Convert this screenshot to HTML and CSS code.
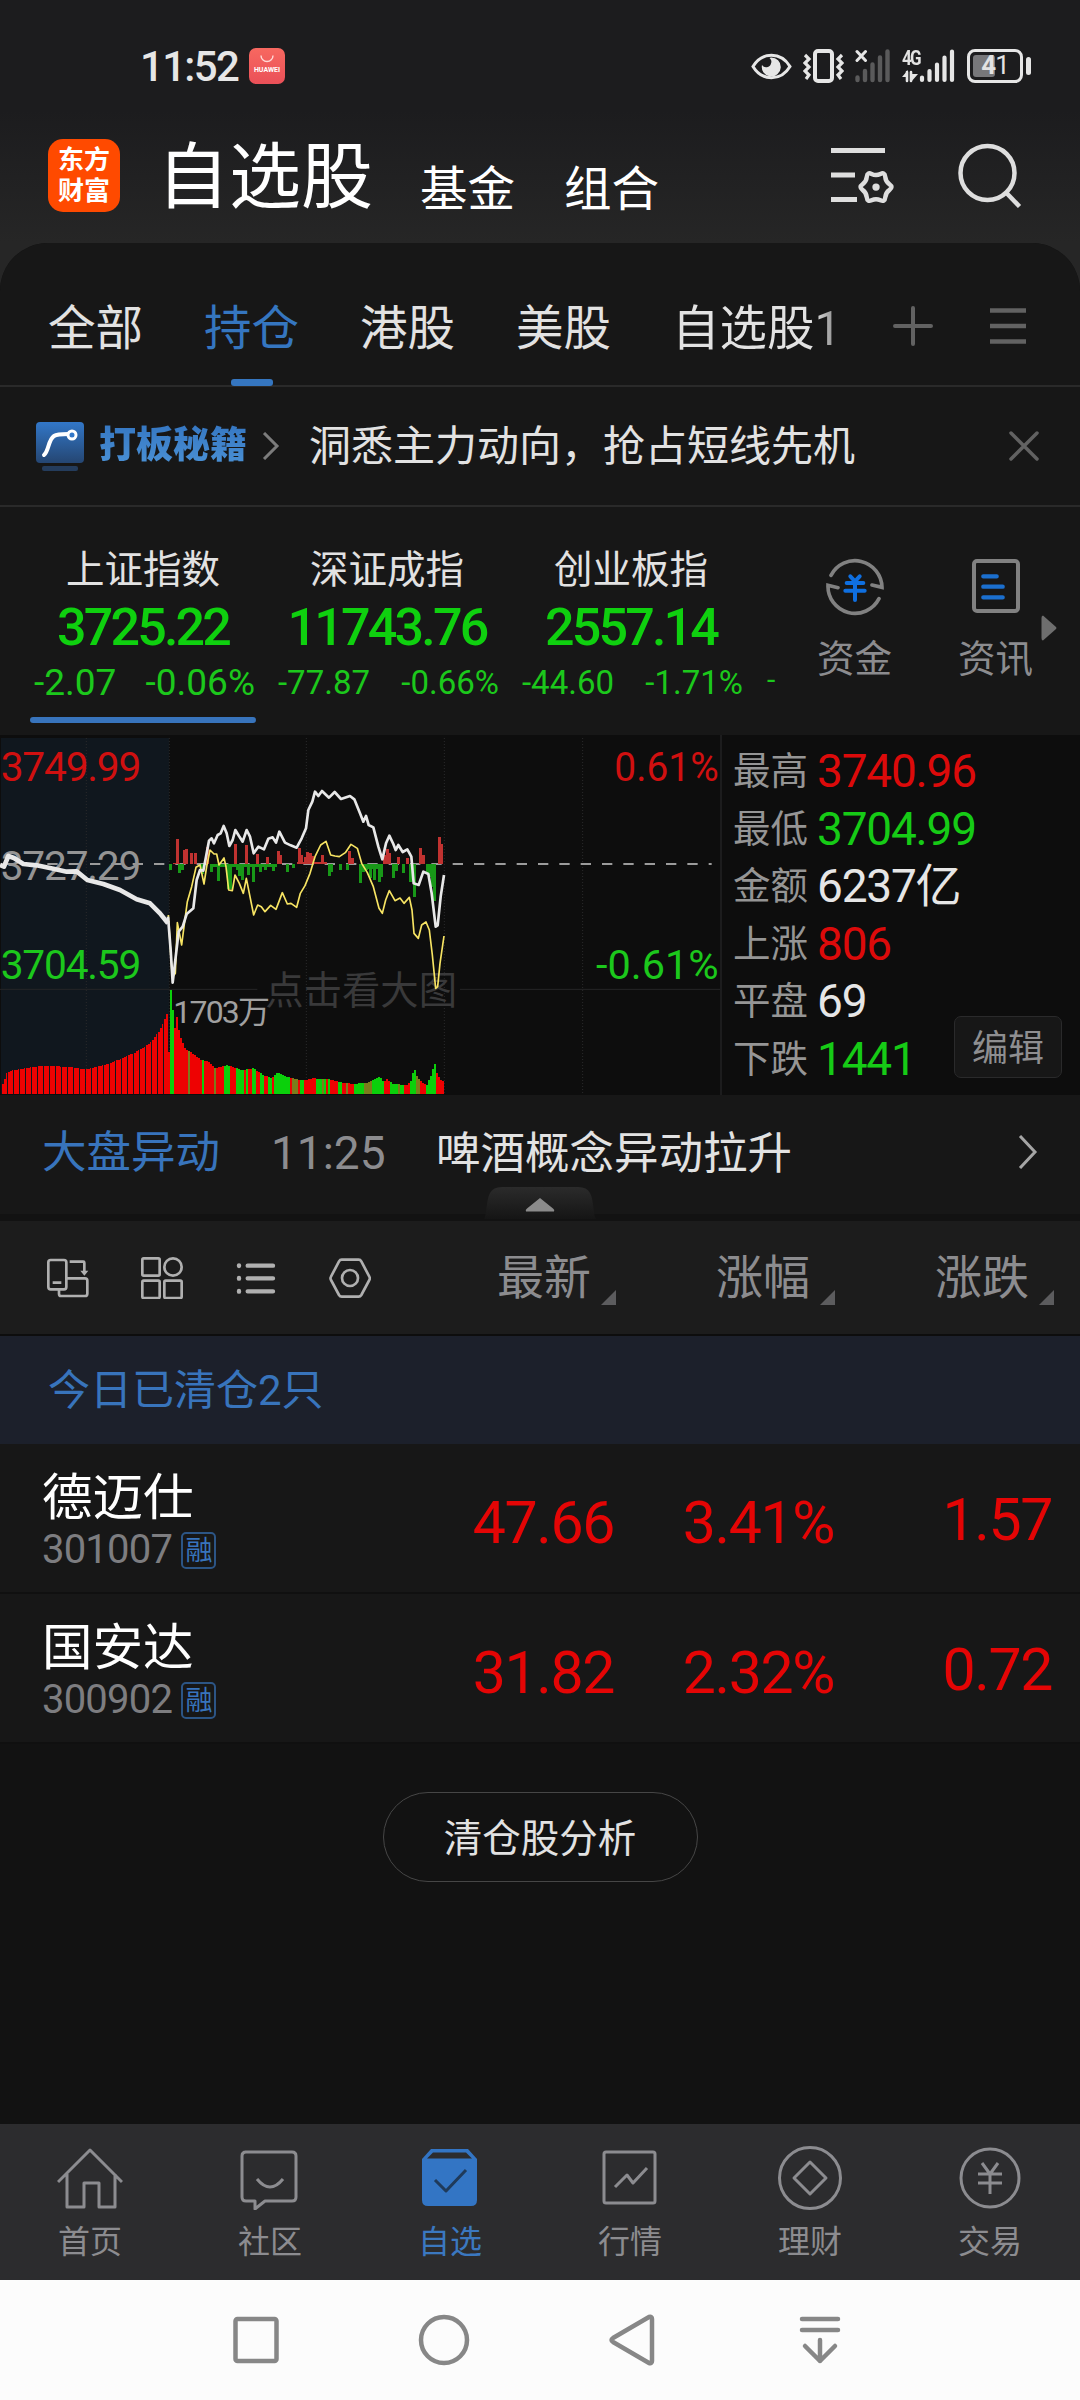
FILE: index.html
```html
<!DOCTYPE html>
<html lang="zh-CN">
<head>
  <meta charset="UTF-8">
  <meta name="viewport" content="width=device-width, initial-scale=1.0">
  <title>自选股</title>
  <link rel="stylesheet" href="styles.css">
</head>
<body>
  <header class="header">
    <div class="status">
      <span class="clock">11:52</span>
      <div class="huawei">
        <svg width="14" height="8" viewBox="0 0 14 8" fill="none" stroke="#ffd9d6" stroke-width="1.4"><path d="M1 0.5a6 6 0 0 0 12 0"/></svg>
        <span>HUAWEI</span>
      </div>
      <div class="status-icons">
        <svg width="41" height="34" viewBox="0 0 41 34">
          <path d="M2 17.500C11 2.500 30 2.500 39 17.500C30 32.500 11 32.500 2 17.500Z" fill="none" stroke="#e6e6e6" stroke-width="3"/>
          <path d="M20 8.500a9.500 9.500 0 1 1-9 7.500a5 5 0 0 0 9-1.500c1-2.500 0-4-1.500-5.500z" fill="#e6e6e6"/>
        </svg>
        <svg class="vibrate" width="41" height="34" viewBox="0 0 41 34" fill="none" stroke="#e6e6e6">
          <rect x="12" y="2" width="17" height="30" rx="3" stroke-width="4"/>
          <path d="M2 6l4 4-4 4 4 4-4 4 4 4-3 4M39 6l-4 4 4 4-4 4 4 4-4 4 3 4" stroke-width="3.200"/>
        </svg>
        <svg class="signal" width="36" height="34" viewBox="0 0 36 34" stroke-linecap="round">
          <path d="M2.500 28.500v2.500M10 22v9M17.500 15.500v15.500M25 8.500v22.500M32.500 2.500v28.500" stroke="#5a5a5b" stroke-width="4.400"/>
          <path d="M2 2.500l8.500 9M10.500 2.500l-8.500 9" stroke="#e6e6e6" stroke-width="3"/>
        </svg>
        <div class="mobile">
          <span>4G</span>
          <svg width="53" height="34" viewBox="0 0 53 34" stroke="#e6e6e6" stroke-linecap="round">
            <path d="M20 28.500v2.500M27.500 22v9M35 15.500v15.500M42.500 8.500v22.500M50 2.500v28.500" stroke-width="4.200"/>
            <path d="M5 23v9M9 23v9" stroke-width="2.600"/>
            <path d="M0 28l6-7v7zM9 33l7-8h-7z" fill="#e6e6e6" stroke="none"/>
          </svg>
        </div>
        <div class="battery"><i></i><span><b>4</b>1</span></div>
      </div>
    </div>
    <div class="topbar">
      <div class="logo">东方<br>财富</div>
      <h1>自选股</h1>
      <a class="top-link">基金</a>
      <a class="top-link">组合</a>
      <svg class="manage" width="64" height="60" viewBox="0 0 64 60" fill="none" stroke="#dedede">
        <path d="M1 5.500h54M1 30h24M1 54.500h26" stroke-width="5"/>
        <g transform="translate(3.700 3.900) scale(0.92)">
          <path d="M60.700 44.500Q56.400 47.500 56 52.800Q55.500 58 50.800 55.800Q46 53.500 41.200 55.800Q36.500 58 36 52.800Q35.600 47.500 31.300 44.500Q27 41.500 31.300 38.500Q35.600 35.500 36 30.200Q36.500 25 41.200 27.200Q46 29.500 50.800 27.200Q55.500 25 56 30.200Q56.400 35.500 60.700 38.500Q65 41.500 60.700 44.500Z" stroke-width="4.800"/>
          <circle cx="46" cy="41.500" r="4" fill="#dedede" stroke="none"/>
        </g>
      </svg>
      <svg class="search" width="64" height="66" viewBox="0 0 64 66" fill="none" stroke="#dedede" stroke-width="4.500">
        <circle cx="29.500" cy="31" r="27"/><path d="M48.500 51l13 13.500"/>
      </svg>
    </div>
  </header>

  <main class="sheet">
    <nav class="tabs">
      <a>全部</a>
      <a class="active">持仓</a>
      <a>港股</a>
      <a>美股</a>
      <a class="fade">自选股1</a>
      <svg class="plus" width="40" height="40" viewBox="0 0 40 40" stroke="#626262" stroke-width="4" stroke-linecap="round"><path d="M2 20h36M20 2v36"/></svg>
      <svg class="menu" width="38" height="38" viewBox="0 0 38 38" stroke="#626262" stroke-width="4.500"><path d="M1 3.500h36M1 19h36M1 34.500h36"/></svg>
    </nav>

    <div class="banner">
      <svg width="50" height="50" viewBox="0 0 50 50">
        <defs><linearGradient id="tile" x1="0" y1="0" x2="0" y2="1"><stop offset="0" stop-color="#3277c8"/><stop offset="1" stop-color="#254672"/></linearGradient></defs>
        <rect x="1" y="1" width="48" height="41" rx="4" fill="url(#tile)"/>
        <rect x="7" y="45" width="36" height="5" rx="2" fill="#243c5c"/>
        <path d="M9 34c5-4 4-15 10-19c3-2 8-2 14-2" fill="none" stroke="#fff" stroke-width="4" stroke-linecap="round"/>
        <circle cx="37" cy="14" r="4" fill="#3277c8" stroke="#fff" stroke-width="3"/>
      </svg>
      <b>打板秘籍</b>
      <svg class="next" width="18" height="28" viewBox="0 0 18 28" fill="none" stroke="#7c7c7c" stroke-width="3"><path d="M2 1l13 13-13 13"/></svg>
      <p>洞悉主力动向，抢占短线先机</p>
      <svg class="close" width="30" height="30" viewBox="0 0 30 30" stroke="#626262" stroke-width="3.500" stroke-linecap="round"><path d="M2 2l26 26M28 2l-26 26"/></svg>
    </div>

    <section class="indexes">
      <div class="index active">
        <h2>上证指数</h2>
        <strong>3725.22</strong>
        <div class="change"><span>-2.07</span><span>-0.06%</span></div>
      </div>
      <div class="index">
        <h2>深证成指</h2>
        <strong>11743.76</strong>
        <div class="change"><span>-77.87</span><span>-0.66%</span></div>
      </div>
      <div class="index">
        <h2>创业板指</h2>
        <strong>2557.14</strong>
        <div class="change"><span>-44.60</span><span>-1.71%</span></div>
      </div>
      <span class="peek">-</span>
      <div class="shortcut">
        <svg width="60" height="60" viewBox="0 0 180 180" fill="none" stroke-linecap="round">
          <path d="M18 58A81 81 0 0 1 171 94L141 87M162 128A81 81 0 0 1 9 88L39 95" stroke="#818181" stroke-width="11"/>
          <path d="M76 61l14 15 14-15M90 76v56M65 81h50M61 104h58" stroke="#0f6fe0" stroke-width="12"/>
        </svg>
        资金
      </div>
      <div class="shortcut">
        <svg width="48" height="60" viewBox="0 0 144 180" fill="none" stroke-linecap="round">
          <rect x="6" y="15" width="132" height="150" rx="9" stroke="#818181" stroke-width="12"/>
          <path d="M34 61h40M34 92h58M34 124h58" stroke="#1b6fce" stroke-width="13"/>
        </svg>
        资讯
      </div>
      <svg class="more" width="16" height="26" viewBox="0 0 16 26"><path d="M2 0.500L15 12Q16 13 15 14L2 25.500Q0.500 25.500 0.500 23V3Q0.500 0.500 2 0.500Z" fill="#6e6e6e"/></svg>
    </section>

    <section class="market">
      <svg class="chart" width="720" height="360" viewBox="0 45 2160 1080">
        <rect x="3" y="54" width="505" height="1068" fill="#10171e"/>
        <path d="M259 54V1122M508 54V1122M919 54V1122M1333 54V1122M1748 54V1122" stroke="#2a2a2b" stroke-width="3" stroke-dasharray="3 6"/>
        <path d="M0 808H772M1380 808H2160" stroke="#262627" stroke-width="3"/>
        <path d="M14 432H2135" stroke="#9b9b9b" stroke-width="6" stroke-dasharray="31 33"/>
        <g id="bars"></g>
        <text class="up" x="2" y="182" textLength="422">3749.99</text>
        <text class="mid" x="2" y="479" textLength="422">3727.29</text>
        <text class="down" x="2" y="778" textLength="422">3704.59</text>
        <text class="up" x="1843" y="182" textLength="313" lengthAdjust="spacingAndGlyphs">0.61%</text>
        <text class="down" x="1788" y="778" textLength="368" lengthAdjust="spacingAndGlyphs">-0.61%</text>
        <text class="hint" x="796" y="852">点击看大图</text>
        <text class="volume" x="520" y="908" textLength="290">1703万</text>
        <path d="M505 585L512 700 517 770 526 760 532 608 545 675 552 620 562 545 575 500 588 442 600 435 612 492 620 440 630 390 642 402 650 402 657 435 672 414 678 440 686 510 697 512 705 465 718 490 730 520 739 475 748 520 761 585 773 555 784 560 795 575 812 556 828 568 847 518 862 552 873 550 890 562 901 520 915 497 930 460 945 410 962 375 978 364 992 405 1005 408 1018 410 1036 398 1053 373 1072 385 1085 430 1102 458 1120 500 1137 565 1147 580 1157 540 1168 512 1185 542 1200 534 1212 550 1228 532 1236 570 1242 640 1255 655 1265 615 1278 606 1288 630 1297 705 1307 805 1313 800 1320 730 1332 648" class="line avg"/>
        <path d="M0 435L12 440 25 408 42 414 70 432 110 436 160 446 200 455 230 454 262 480 310 492 360 510 410 538 450 550 480 580 504 610" class="line pre"/>
        <path d="M504 590L512 690 518 788 526 720 536 635 548 620 560 582 580 565 590 480 600 450 610 452 618 410 627 362 635 355 642 370 653 345 662 340 671 318 680 340 688 378 698 360 706 330 717 348 728 365 740 330 750 350 761 400 775 380 792 388 805 356 818 352 828 368 838 335 855 368 872 376 890 383 905 355 918 325 925 270 937 245 945 215 955 228 966 213 987 233 1004 216 1023 237 1050 228 1063 238 1080 280 1090 305 1098 288 1106 315 1120 322 1135 380 1147 418 1158 370 1168 347 1180 372 1187 390 1195 375 1208 396 1222 388 1234 410 1241 490 1256 495 1270 455 1285 462 1295 520 1307 620 1313 616 1322 530 1332 465" class="line price"/>
      </svg>
      <div class="stats">
        <p>最高<b class="up">3740.96</b></p>
        <p>最低<b class="down">3704.99</b></p>
        <p>金额<b>6237亿</b></p>
        <p>上涨<b class="up">806</b></p>
        <p>平盘<b>69</b></p>
        <p>下跌<b class="down">1441</b></p>
        <a class="edit">编辑</a>
      </div>
    </section>

    <div class="news">
      <span class="news-tag">大盘异动</span>
      <time>11:25</time>
      <p>啤酒概念异动拉升</p>
      <svg width="20" height="34" viewBox="0 0 20 34" fill="none" stroke="#a5a5a5" stroke-width="3"><path d="M2 1l15 16-15 16"/></svg>
    </div>
    <div class="divider">
      <svg class="handle" width="112" height="32" viewBox="0 0 112 32">
        <defs><linearGradient id="grip" x1="0" y1="0" x2="0" y2="1"><stop offset="0" stop-color="#2b2b2b"/><stop offset="1" stop-color="#151515"/></linearGradient></defs>
        <path d="M0 32C3 28 2 13 6 6Q9 0 18 0H94Q103 0 106 6C110 13 109 28 112 32Z" fill="url(#grip)"/>
        <path d="M42 24.500Q41 23 43 21.500L56 11 69 21.500Q71 23 70 24.500Z" fill="#8b8b8b"/>
      </svg>
    </div>

    <div class="toolbar">
      <svg width="42" height="42" viewBox="0 0 126 126" fill="none" stroke="#b0b0b0" stroke-width="8">
        <rect x="4" y="9" width="54" height="88" rx="7"/><path d="M17 77h26M68 14h41q3 0 3 3v28M58 64h56q7 0 7 7v39q0 7-7 7H42q-6 0-6-7V97"/>
        <path d="M100 41h24l-12 15z" fill="#b0b0b0" stroke="none"/>
      </svg>
      <svg width="42" height="42" viewBox="0 0 126 126" fill="none" stroke="#b0b0b0" stroke-width="8">
        <rect x="4" y="4" width="52" height="52" rx="4"/><circle cx="96" cy="30" r="26"/><rect x="4" y="71" width="52" height="52" rx="4"/><rect x="70" y="71" width="52" height="52" rx="4"/>
      </svg>
      <svg width="42" height="42" viewBox="0 0 126 126" fill="none" stroke="#b0b0b0" stroke-width="13" stroke-linecap="round">
        <path d="M12 25v2M12 63v2M12 102v2M38 26h76M38 64h76M38 103h76"/>
      </svg>
      <svg width="42" height="42" viewBox="0 0 126 126" fill="none" stroke="#b0b0b0" stroke-width="8">
        <path d="M38 8h51q5 0 8 5l24 46q3 5 0 10l-24 45q-3 5-8 5H38q-5 0-8-5L6 69q-3-5 0-10L30 13q3-5 8-5z"/><circle cx="63" cy="63" r="24"/>
      </svg>
      <span class="sort">最新</span>
      <span class="sort">涨幅</span>
      <span class="sort">涨跌</span>
    </div>

    <div class="notice">今日已清仓2只</div>

    <section class="stocks">
      <div class="stock">
        <div class="name"><h3>德迈仕</h3><p>301007<i>融</i></p></div>
        <span class="latest">47.66</span>
        <span class="percent">3.41%</span>
        <span class="amount">1.57</span>
      </div>
      <div class="stock">
        <div class="name"><h3>国安达</h3><p>300902<i>融</i></p></div>
        <span class="latest">31.82</span>
        <span class="percent">2.32%</span>
        <span class="amount">0.72</span>
      </div>
    </section>

    <a class="analysis">清仓股分析</a>
  </main>

  <nav class="tabbar">
    <a>
      <svg width="66" height="66" viewBox="0 0 66 66"><path d="M1 38L33 6l32 32M10 30v33h17V39h15v24h16V30"/></svg>
      首页
    </a>
    <a>
      <svg width="66" height="66" viewBox="0 0 66 66"><path d="M8 8h47q4 0 4 4v41q0 4-4 4H28l-10 8v-8H9q-4 0-4-4V12q0-4 4-4zM20 35q13 16 26 0"/></svg>
      社区
    </a>
    <a class="active">
      <svg width="66" height="66" viewBox="0 0 66 66"><path class="solid" d="M5 15l9-10h37l9 10v41q0 6-6 6H11q-6 0-6-6z"/><path d="M10 14.500L16 8.500h33l6 6z" fill="#2c2c2e" stroke="none"/><path class="tick" d="M18 36l11 11 20-21"/></svg>
      自选
    </a>
    <a>
      <svg width="66" height="66" viewBox="0 0 66 66"><rect x="7" y="8" width="51" height="51" rx="2"/><path d="M18 43l12-12 6 8 14-15"/></svg>
      行情
    </a>
    <a>
      <svg width="66" height="66" viewBox="0 0 66 66"><circle cx="33" cy="34" r="30.500"/><path d="M33 18l16 16-16 16-16-16z"/></svg>
      理财
    </a>
    <a>
      <svg width="66" height="66" viewBox="0 0 66 66"><circle cx="33" cy="34" r="29"/><path d="M25 19l8 11 8-11M33 30v20M21 30h24M21 39h24"/></svg>
      交易
    </a>
  </nav>

  <footer class="system">
    <svg width="56" height="56" viewBox="0 0 56 56"><rect x="7.500" y="7" width="41" height="42" rx="2"/></svg>
    <svg width="56" height="56" viewBox="0 0 56 56"><circle cx="28" cy="28" r="23"/></svg>
    <svg width="56" height="56" viewBox="0 0 56 56"><path d="M45 5q3-1 3 2v42q0 3-3 2L9 30q-3-2 0-4z"/></svg>
    <svg width="56" height="56" viewBox="0 0 56 56"><path d="M10 7h36M10 18h36M28 28v21M13 34l15 15 15-15"/></svg>
  </footer>

  <script src="chart.js"></script>
</body>
</html>
```
FILE: styles.css
```css
* {
  margin: 0;
  padding: 0;
  box-sizing: border-box;
}

body {
  width: 1080px;
  height: 2400px;
  display: flex;
  flex-direction: column;
  background: #121212;
  color: #e2e2e2;
  font-family: Roboto, "Noto Sans CJK SC", sans-serif;
  line-height: 1.2;
  overflow: hidden;
}
svg {
  display: block;
  flex-shrink: 0;
}
h1, h2, h3 {
  font-weight: 400;
}
.up {
  color: #e00f0f;
  fill: #d01010;
}
.down {
  color: #14cc14;
  fill: #1cc81c;
}

/* header */
.header {
  height: 291px;
  margin-bottom: -48px;
  background: linear-gradient(#1c1c1e 110px, #262626 243px);
}
.status {
  display: flex;
  align-items: center;
  height: 132px;
  padding: 0 50px 0 140px;
}
.clock {
  width: 109px;
  font-size: 42px;
  font-weight: 500;
  letter-spacing: -1.7px;
  color: #e6e6e6;
  padding-top: 2px;
}
.huawei {
  display: flex;
  flex-direction: column;
  align-items: center;
  gap: 3px;
  width: 36px;
  height: 36px;
  padding-top: 7px;
  border-radius: 7px;
  background: linear-gradient(#f76860, #ea5058);
  color: #fff;
  font-size: 7px;
  font-weight: 700;
  line-height: 8px;
}
.status-icons {
  display: flex;
  align-items: center;
  margin-left: auto;
  height: 34px;
}
.vibrate {
  margin-left: 11px;
}
.signal {
  margin-left: 11px;
}
.mobile {
  position: relative;
  margin-left: 11px;
}
.mobile span {
  position: absolute;
  top: -1px;
  left: 0;
  font-size: 20px;
  font-weight: 700;
  line-height: 20px;
  letter-spacing: -2px;
  transform: scaleX(0.85);
  transform-origin: left;
}
.battery {
  position: relative;
  display: flex;
  align-items: center;
  justify-content: center;
  width: 56px;
  height: 34px;
  margin: 0 7px 0 12px;
  border: 3px solid #e6e6e6;
  border-radius: 8px;
  font-size: 26px;
}
.battery i {
  position: absolute;
  left: 3px;
  top: 3px;
  width: 22px;
  height: 22px;
  border-radius: 3px;
  background: #77777a;
}
.battery span {
  position: relative;
  letter-spacing: -1px;
}
.battery b {
  font-weight: 700;
}
.battery::after {
  content: "";
  position: absolute;
  right: -11px;
  top: 5px;
  width: 5px;
  height: 18px;
  border-radius: 3px;
  background: #e6e6e6;
}
.topbar {
  display: flex;
  align-items: center;
  height: 86px;
  padding: 0 58px 0 48px;
  color: #fff;
}
.logo {
  width: 72px;
  height: 73px;
  padding-top: 6px;
  border-radius: 15px;
  background: #ff4a00;
  font-size: 26px;
  font-weight: 700;
  line-height: 31px;
  text-align: center;
}
.topbar h1 {
  width: 263px;
  margin-left: 37px;
  padding-top: 5px;
  font-size: 72px;
  line-height: 80px;
}
.top-link {
  width: 144px;
  padding-top: 29px;
  font-size: 47.5px;
  line-height: 60px;
}
.manage {
  margin-left: 122px;
}
.search {
  margin-left: auto;
}

/* main sheet */
.sheet {
  display: flex;
  flex-direction: column;
  height: 1881px;
  flex-shrink: 0;
  border-radius: 48px 48px 0 0;
  background: #121212;
  overflow: hidden;
}
.tabs {
  display: flex;
  align-items: center;
  gap: 61px;
  height: 144px;
  flex-shrink: 0;
  padding: 0 54px 0 48px;
  background: #171717;
  border-bottom: 2px solid #2a2a2a;
  font-size: 47.5px;
}
.tabs a {
  position: relative;
  line-height: 60px;
  padding-top: 30px;
  white-space: nowrap;
}
.tabs .active {
  color: #3576c0;
}
.tabs .active::after {
  content: "";
  position: absolute;
  left: 27px;
  bottom: -27px;
  width: 42px;
  height: 7px;
  border-radius: 3px;
  background: #3576c0;
}
.tabs .fade {
  background: linear-gradient(90deg, #e2e2e2 84%, #777);
  -webkit-background-clip: text;
  -webkit-text-fill-color: transparent;
}
.plus {
  margin: 24px 0 0 -9px;
}
.menu {
  margin: 24px 0 0 -5px;
}
.banner {
  display: flex;
  align-items: center;
  height: 120px;
  flex-shrink: 0;
  padding: 0 41px 0 35px;
  background: #171717;
  border-bottom: 2px solid #2a2a2a;
}
.banner b {
  width: 151px;
  margin-left: 14px;
  font-size: 37px;
  font-weight: 900;
  white-space: nowrap;
  background: linear-gradient(#3577c2, #4b92d6);
  -webkit-background-clip: text;
  -webkit-text-fill-color: transparent;
}
.next {
  margin-left: 12px;
}
.banner p {
  margin-left: 29px;
  padding-top: 3px;
  font-size: 42px;
}
.close {
  margin-left: auto;
}

.indexes {
  display: flex;
  height: 228px;
  flex-shrink: 0;
  padding-left: 21px;
  background: #171717;
}
.index {
  position: relative;
  width: 244px;
  flex-shrink: 0;
  text-align: center;
}
.index h2 {
  margin-top: 38px;
  font-size: 38.5px;
  line-height: 50px;
}
.index strong {
  display: block;
  margin-top: 6px;
  font-size: 52px;
  font-weight: 500;
  line-height: 54px;
  letter-spacing: -2.8px;
  color: #0fd00f;
}
.change {
  display: flex;
  justify-content: space-between;
  align-items: center;
  height: 50px;
  margin-top: 3px;
  padding: 0 10px 0 13px;
  font-size: 33px;
  letter-spacing: 0;
  color: #1cc81c;
}
.active .change {
  font-size: 37px;
}
.index.active::after {
  content: "";
  position: absolute;
  left: 9px;
  bottom: 12px;
  width: 226px;
  height: 6px;
  border-radius: 3px;
  background: #3874bc;
}
.peek {
  width: 36px;
  padding: 153px 0 0 14px;
  font-size: 30px;
  line-height: 40px;
  color: #1cc81c;
}
.shortcut {
  display: flex;
  flex-direction: column;
  align-items: center;
  gap: 19px;
  width: 141px;
  padding-top: 49px;
  margin-left: -5px;
  font-size: 37.5px;
  line-height: 48px;
  color: #8c8c8f;
}
.shortcut + .shortcut {
  margin-left: 0;
}
.more {
  margin: 108px 0 0 -25px;
}

/* intraday chart */
.market {
  display: flex;
  height: 360px;
  flex-shrink: 0;
  background: #0d0d0d;
}
.chart text {
  font-size: 122px;
}
.chart rect {
  shape-rendering: crispEdges;
}
.chart .mid {
  fill: #949494;
}
.chart .hint {
  font-size: 115px;
  fill: #39393a;
}
.chart .volume {
  font-size: 96px;
  fill: #a0a0a0;
}
.line {
  fill: none;
  stroke-linejoin: round;
}
.avg {
  stroke: #f7e463;
  stroke-width: 5;
}
.price {
  stroke: #e8e8e8;
  stroke-width: 8;
}
.pre {
  stroke: #e8e8e8;
  stroke-width: 14;
}
.bar-up {
  fill: #c03230;
}
.bar-down {
  fill: #189818;
}
.vol-up {
  fill: #ee0202;
}
.vol-down {
  fill: #0bd00b;
}
.vol-mix {
  fill: #7c7c1c;
}
.stats {
  position: relative;
  width: 360px;
  padding: 8px 0 0 11px;
  border-left: 2px solid #1c1c1d;
}
.stats p {
  display: flex;
  align-items: center;
  gap: 9px;
  height: 57.5px;
  font-size: 37.5px;
  color: #959595;
}
.stats b {
  font-size: 46px;
  font-weight: 400;
  letter-spacing: -1.2px;
  color: #e6e6e6;
}
.stats .up {
  color: #dc0a0a;
}
.stats .down {
  color: #16cb16;
}
.edit {
  position: absolute;
  right: 18px;
  bottom: 17px;
  width: 108px;
  height: 62px;
  border: 1px solid #2a2a2b;
  border-radius: 7px;
  background: #171717;
  font-size: 36px;
  line-height: 65px;
  text-align: center;
  color: #8e8e90;
}

.news {
  display: flex;
  align-items: center;
  height: 119px;
  flex-shrink: 0;
  padding: 0 42px 2px;
  background: #171717;
  font-size: 44.5px;
}
.news-tag {
  width: 229px;
  color: #3874bc;
}
.news time {
  width: 165px;
  font-size: 46px;
  color: #8c8c8f;
}
.news p {
  padding-top: 2px;
}
.news svg {
  margin: -4px 0 0 auto;
}
.divider {
  position: relative;
  height: 7px;
  flex-shrink: 0;
}
.handle {
  position: absolute;
  left: 484px;
  bottom: 2px;
}

/* list */
.toolbar {
  display: flex;
  align-items: center;
  gap: 52px;
  height: 115px;
  flex-shrink: 0;
  padding-left: 47px;
  background: #1c1c1c;
  border-bottom: 2px solid #0d0d0d;
}
.sort {
  position: relative;
  width: 167px;
  flex-shrink: 0;
  padding-top: 2px;
  font-size: 47px;
  color: #8c8c8f;
}
.toolbar svg + .sort {
  margin-left: 74px;
}
.sort:last-child {
  width: 120px;
}
.sort::after {
  content: "";
  position: absolute;
  left: 104px;
  bottom: 2px;
  border-left: 15px solid transparent;
  border-bottom: 15px solid #5c5c5e;
}
.notice {
  height: 108px;
  flex-shrink: 0;
  padding-left: 48px;
  background: #1c202b;
  font-size: 42px;
  line-height: 110px;
  color: #3874bc;
}
.stock {
  display: flex;
  height: 150px;
  padding: 0 27px 0 42px;
  background: #171717;
  border-bottom: 2px solid #101010;
  font-size: 59px;
  line-height: 157px;
  text-align: right;
  letter-spacing: -1.4px;
  color: #e40505;
}
.name {
  width: 200px;
  text-align: left;
  letter-spacing: 0;
}
.name h3 {
  margin-top: 24px;
  font-size: 50.5px;
  line-height: 60px;
  color: #fff;
}
.name p {
  display: flex;
  align-items: center;
  gap: 9px;
  margin-top: 2px;
  font-size: 40px;
  line-height: 40px;
  letter-spacing: -0.8px;
  color: #7d7d80;
}
.name i {
  width: 35px;
  height: 37px;
  border: 2px solid #2c5585;
  border-radius: 5px;
  font-size: 27px;
  font-style: normal;
  line-height: 34px;
  text-align: center;
  color: #3874bc;
}
.latest {
  width: 372px;
}
.percent {
  width: 220px;
}
.amount {
  width: 218px;
  line-height: 151px;
}
.analysis {
  align-self: center;
  width: 315px;
  height: 90px;
  margin-top: 48px;
  border: 1px solid #464646;
  border-radius: 45px;
  font-size: 38.5px;
  line-height: 92px;
  text-align: center;
}

/* bottom bars */
.tabbar {
  display: flex;
  height: 156px;
  flex-shrink: 0;
  background: #2c2c2e;
}
.tabbar a {
  display: flex;
  flex-direction: column;
  align-items: center;
  gap: 11px;
  width: 180px;
  padding-top: 20px;
  font-size: 32px;
  line-height: 42px;
  color: #8c8c90;
}
.tabbar svg {
  fill: none;
  stroke: #8c8c90;
  stroke-width: 3;
  stroke-linejoin: round;
}
.tabbar .active {
  color: #3b78c0;
}
.tabbar .solid {
  fill: #3375c4;
  stroke: none;
}
.tabbar .tick {
  stroke: #1f3a5a;
}
.system {
  display: flex;
  align-items: center;
  gap: 132px;
  height: 120px;
  flex-shrink: 0;
  padding-left: 228px;
  background: #fcfcfc;
}
.system svg {
  fill: none;
  stroke: #878787;
  stroke-width: 4.5;
  stroke-linecap: round;
  stroke-linejoin: round;
}
```
FILE: chart.js
```js
const volume = [
  [5, 1100], [20, 1060], [40, 1050], [120, 1038], [200, 1040], [260, 1048], [330, 1030], [400, 1000],
  [450, 970], [480, 930], [500, 882], [507, 1015], [508, 810], [515, 812], [517, 862], [524, 925], [531, 885], [537, 940],
  [556, 988], [568, 993], [600, 1018], [625, 1025], [645, 1045], [680, 1035], [725, 1050], [760, 1045],
  [790, 1065], [815, 1075], [830, 1058], [860, 1070], [905, 1082], [940, 1075], [985, 1078], [1020, 1087],
  [1060, 1092], [1100, 1088], [1137, 1070], [1150, 1084], [1160, 1078], [1180, 1092], [1220, 1095],
  [1235, 1080], [1241, 1040], [1250, 1068], [1265, 1088], [1280, 1094], [1295, 1060], [1303, 1025],
  [1309, 1058], [1320, 1080], [1335, 1085]
];

// [end x, u = up / d = down / m = overlapping]
const colors = [
  [506, 'u'], [521, 'd'], [562, 'u'], [570, 'm'], [602, 'u'], [612, 'd'], [638, 'u'], [644, 'm'],
  [672, 'u'], [690, 'd'], [705, 'u'], [727, 'd'], [738, 'u'], [744, 'd'], [755, 'u'], [765, 'd'],
  [775, 'u'], [788, 'd'], [803, 'u'], [812, 'd'], [820, 'u'], [868, 'd'], [874, 'u'], [892, 'm'],
  [897, 'u'], [907, 'd'], [948, 'u'], [962, 'd'], [970, 'm'], [977, 'd'], [983, 'u'], [990, 'd'],
  [1010, 'u'], [1022, 'd'], [1034, 'u'], [1044, 'm'], [1060, 'u'], [1092, 'd'], [1115, 'm'],
  [1147, 'd'], [1168, 'u'], [1190, 'd'], [1200, 'm'], [1210, 'd'], [1225, 'u'], [1247, 'd'],
  [1257, 'm'], [1278, 'u'], [1306, 'd'], [1336, 'u']
];

const rises = [
  [532, 358], [552, 390], [559, 388], [573, 400], [587, 398], [622, 380], [705, 372], [740, 374], [773, 403],
  [802, 411], [836, 393], [842, 405], [897, 383], [905, 405], [915, 410], [923, 396], [931, 400], [938, 408],
  [966, 404], [1049, 394], [1056, 415], [1154, 405], [1162, 388], [1168, 399], [1196, 412], [1222, 414],
  [1262, 385], [1269, 404], [1318, 352], [1325, 372]
];
const falls = [
  [512, 450], [539, 459], [546, 449], [608, 462], [633, 455], [656, 482], [684, 506], [691, 507], [711, 450],
  [718, 468], [726, 480], [746, 465], [760, 486], [781, 455], [795, 450], [820, 452], [861, 456], [880, 445],
  [987, 467], [994, 456], [1022, 450], [1042, 451], [1082, 489], [1090, 455], [1098, 450], [1112, 475],
  [1124, 481], [1138, 487], [1145, 470], [1180, 473], [1188, 452], [1209, 458], [1232, 485], [1242, 532],
  [1283, 458], [1290, 470], [1297, 500], [1304, 543]
];

function topAt(x) {
  for (let i = 1; i < volume.length; i++) {
    const [x0, y0] = volume[i - 1];
    const [x1, y1] = volume[i];
    if (x <= x1) return y0 + (y1 - y0) * Math.max(0, x - x0) / (x1 - x0);
  }
  return volume[volume.length - 1][1];
}

let html = '';
function rect(x, y, w, h, cls) {
  html += `<rect class="${cls}" x="${x}" y="${y.toFixed(1)}" width="${w}" height="${h.toFixed(1)}"/>`;
}

const names = { u: 'vol-up', d: 'vol-down', m: 'vol-mix' };
for (let x = 6; x < 1332; x += 6) {
  const color = colors.find(c => x < c[0])[1];
  const top = topAt(x + 2);
  // pre-market bars keep a thin gap
  const gap = x < 500 && x % 18 === 0;
  rect(x, top, gap ? 3 : 6, 1122 - top, names[color]);
}

rect(520, 429, 20, 3, 'bar-up');
rect(890, 426, 90, 6, 'bar-up');
rect(640, 432, 190, 9, 'bar-down');
rect(1080, 432, 68, 14, 'bar-down');
rises.forEach(([x, y]) => rect(x - 4, y, 9, 432 - y, 'bar-up'));
falls.forEach(([x, y]) => rect(x - 4, 432, 9, y - 432, 'bar-down'));

document.getElementById('bars').innerHTML = html;
```
